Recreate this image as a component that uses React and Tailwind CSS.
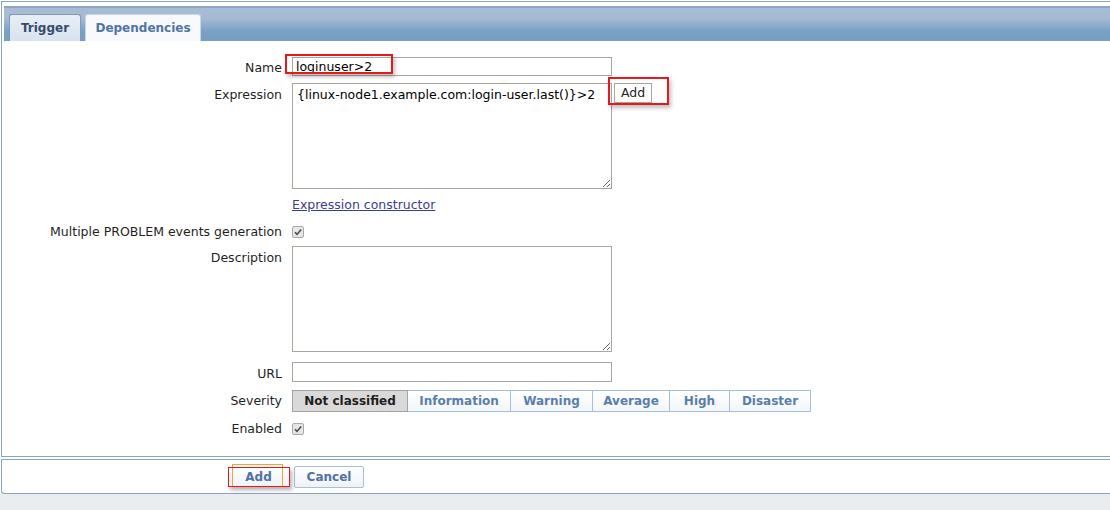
import React from "react";

const font = { fontFamily: '"DejaVu Sans", Tahoma, Verdana, sans-serif' };

function Check() {
    return (
        <svg width="12" height="12" viewBox="0 0 12 12" className="block">
            <rect x="0.5" y="0.5" width="11" height="11" rx="1.5" fill="#e6e6e6" stroke="#a9a9a9" />
            <path d="M3 6.2 L5 8.4 L9.2 3.4" fill="none" stroke="#4a4a4a" strokeWidth="1.6" />
        </svg>
    );
}

function Label({ children, className = "" }) {
    return <div className={`text-right text-[#1f1f1f] ${className}`}>{children}</div>;
}

const severities = [
    { name: "Not classified", w: "w-[116px]" },
    { name: "Information", w: "w-[103px]" },
    { name: "Warning", w: "w-[82px]" },
    { name: "Average", w: "w-[77px]" },
    { name: "High", w: "w-[60px]" },
    { name: "Disaster", w: "w-[81px]" },
];

export default function App() {
    return (
        <div className="w-[1110px] h-[510px] overflow-hidden bg-white flex flex-col text-[12.5px]" style={font}>
            <div className="h-[1px] bg-white" />
            {/* main form panel */}
            <div className="ml-[1px] border-l border-t border-b border-[#8aa5c4] bg-white pt-[4px]">
                <div className="ml-[2px] h-[35px] border-t-2 border-[#8ea7c2] bg-[linear-gradient(#a8bdd5_0%,#a6bbd3_30%,#7aa0c5_70%,#779ec4_100%)] flex items-end pl-[5px] gap-[4px]">
                    <div className="h-[27px] w-[72px] rounded-t-[3px] border border-b-0 border-[#7c9bc0] bg-[linear-gradient(#e8eef6,#d8e3ef)] flex items-center justify-center font-bold text-[12px] text-[#364c6c]">
                        Trigger
                    </div>
                    <div className="h-[27px] w-[116px] rounded-t-[3px] border border-b-0 border-[#c9d6e6] bg-[#f7f9fc] flex items-center justify-center font-bold text-[12px] text-[#4e74a6]">
                        Dependencies
                    </div>
                </div>

                <div className="grid grid-cols-[278px_1fr] gap-x-[10px] pt-[16px] pb-[19px] ml-[2px]">
                    {/* Name */}
                    <Label className="h-[19px] leading-[19px] pt-[1px]">Name</Label>
                    <div className="relative">
                        <div className="w-[320px] h-[19px] border border-[#a9a79b] px-[3px] leading-[17px]">loginuser&gt;2</div>
                        <div className="absolute left-[-7px] top-[-3px] w-[108px] h-[20px] border-2 border-[#e5191d] shadow-[2px_3px_4px_rgba(0,0,0,0.25)]" />
                    </div>

                    {/* Expression */}
                    <Label className="mt-[7px] pt-[3px]">Expression</Label>
                    <div className="mt-[7px] flex items-start relative">
                        <textarea
                            readOnly
                            wrap="off"
                            value="{linux-node1.example.com:login-user.last()}>2"
                            className="w-[320px] h-[106px] border border-[#a9a79b] px-[4px] py-[3px] text-[12.5px] leading-[16px] outline-none overflow-hidden"
                            style={font}
                        />
                        <div className="ml-[2px] w-[38px] h-[20px] border border-[#a9a79b] bg-white flex items-center justify-center text-[#1f1f1f]">
                            Add
                        </div>
                        <div className="absolute left-[316px] top-[-6px] w-[61px] h-[28px] border-2 border-[#e5191d] shadow-[2px_3px_4px_rgba(0,0,0,0.25)]" />
                    </div>

                    {/* constructor link */}
                    <div className="mt-[8px] h-[16px]" />
                    <div className="mt-[8px] h-[16px] leading-[16px]">
                        <span className="text-[#3b3d8e] underline">Expression constructor</span>
                    </div>

                    {/* multiple */}
                    <Label className="mt-[11px] h-[16px] leading-[16px]">Multiple PROBLEM events generation</Label>
                    <div className="mt-[11px] h-[16px] flex items-center">
                        <Check />
                    </div>

                    {/* Description */}
                    <Label className="mt-[6px] pt-[3px]">Description</Label>
                    <div className="mt-[6px]">
                        <textarea readOnly className="block w-[320px] h-[106px] border border-[#a9a79b] outline-none" />
                    </div>

                    {/* URL */}
                    <Label className="mt-[10px] h-[20px] leading-[20px] pt-[2px]">URL</Label>
                    <div className="mt-[10px]">
                        <div className="w-[320px] h-[20px] border border-[#a9a79b]" />
                    </div>

                    {/* Severity */}
                    <Label className="mt-[8px] h-[22px] leading-[22px]">Severity</Label>
                    <div className="mt-[8px] flex h-[22px]">
                        {severities.map((s, i) => (
                            <div
                                key={s.name}
                                className={
                                    i === 0
                                        ? `${s.w} h-[22px] flex items-center justify-center border border-[#a3a3a3] bg-[#d9d9d9] font-bold text-[12px] text-[#1f1f1f]`
                                        : `${s.w} h-[22px] flex items-center justify-center border border-l-0 border-[#a8bfd9] bg-[linear-gradient(#ffffff,#f3f6fa)] font-bold text-[12px] text-[#5a7eab]`
                                }
                            >
                                {s.name}
                            </div>
                        ))}
                    </div>

                    {/* Enabled */}
                    <Label className="mt-[9px] h-[16px] leading-[16px]">Enabled</Label>
                    <div className="mt-[9px] h-[16px] flex items-center">
                        <Check />
                    </div>
                </div>
            </div>

            {/* buttons panel */}
            <div className="mt-[2px] ml-[1px] h-[35px] border border-r-0 border-[#8aa5c4] rounded-bl-[3px] bg-white flex items-start pt-[6px] pl-[226px] gap-[5px]">
                <div className="relative w-[61px] h-[21px] flex items-center justify-center font-bold text-[12px] text-[#4f72a0] bg-[linear-gradient(#ffffff,#eef2f7)]">
                    Add
                    <div className="absolute left-[4px] top-[-2px] w-[51px] h-[23px] border border-[#f0a334]" />
                    <div className="absolute left-0 top-[1px] w-[62px] h-[20px] border-[1.5px] border-[#e5191d] shadow-[2px_3px_4px_rgba(0,0,0,0.3)]" />
                </div>
                <div className="w-[70px] h-[22px] rounded-[2px] border border-[#a8bfd9] bg-[linear-gradient(#ffffff,#eef2f7)] flex items-center justify-center font-bold text-[12px] text-[#4f72a0]">
                    Cancel
                </div>
            </div>
            <div className="flex-1 bg-[#e9edf0]" />
        </div>
    );
}
